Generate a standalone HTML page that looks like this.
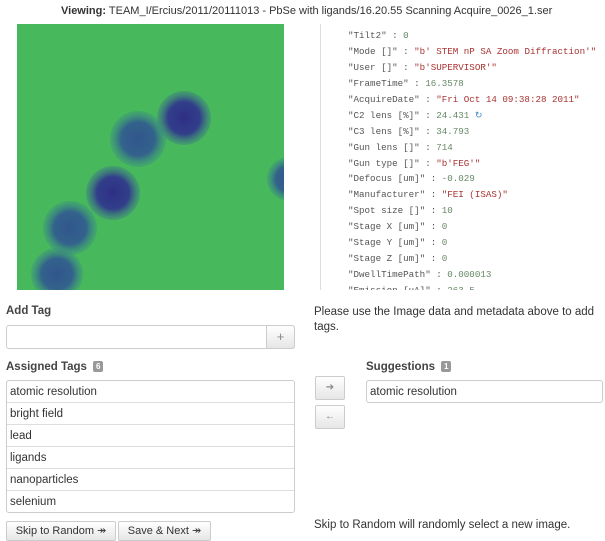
<!DOCTYPE html>
<html><head><meta charset="utf-8"><style>
*{box-sizing:border-box;margin:0;padding:0}
body{width:605px;height:530px;overflow:hidden;background:#fff;font-family:"Liberation Sans",sans-serif;color:#333;font-size:11px;position:relative}
.a{position:absolute}
.hd{left:61px;top:5px;font-size:11px;white-space:nowrap;color:#333}
.meta{left:348px;top:28px;font-family:"Liberation Mono",monospace;font-size:9.2px;line-height:15.93px;color:#555;white-space:nowrap;height:262px;overflow:hidden}
.s{color:#a33}.n{color:#686}
.lbl{font-weight:bold;font-size:11.5px;color:#444}
.badge{display:inline-block;background:#999;color:#fff;font-size:8px;padding:0 3px;border-radius:2px;margin-left:6px;vertical-align:1px;line-height:11px}
.box{border:1px solid #ccc;border-radius:3px}
.row{height:22px;line-height:22px;padding-left:3px;border-bottom:1px solid #ddd;font-size:11.5px;color:#333}
.btn{border:1px solid #ccc;background:linear-gradient(#fff,#e6e6e6);border-radius:2px;color:#888;text-align:center}
</style></head><body>
<div class="a hd"><b>Viewing:</b> TEAM_I/Ercius/2011/20111013 - PbSe with ligands/16.20.55 Scanning Acquire_0026_1.ser</div>
<svg class="a" style="left:17px;top:24px" width="267" height="266">
<defs>
<radialGradient id="d"><stop offset="0" stop-color="#2e2f86"/><stop offset=".6" stop-color="#323f8a"/><stop offset="1" stop-color="#3b6e8e" stop-opacity="0.3"/></radialGradient>
<radialGradient id="t"><stop offset="0" stop-color="#31568c"/><stop offset=".6" stop-color="#33628c"/><stop offset="1" stop-color="#3a8a88" stop-opacity="0.3"/></radialGradient>
</defs>
<rect width="267" height="266" fill="#47b85c"/>
<circle cx="167" cy="94" r="27" fill="url(#d)"/>
<circle cx="121" cy="115" r="28" fill="url(#t)"/>
<circle cx="96" cy="169" r="27" fill="url(#d)"/>
<circle cx="53" cy="204" r="27" fill="url(#t)"/>
<circle cx="40" cy="250" r="26" fill="url(#t)"/>
<circle cx="272" cy="155" r="22" fill="url(#t)"/>
</svg>
<div class="a" style="left:320px;top:24px;width:1px;height:266px;background:#ddd"></div>
<div class="a meta">"Tilt2" : <span class="n">0</span><br>"Mode []" : <span class="s">"b' STEM nP SA Zoom Diffraction'"</span><br>"User []" : <span class="s">"b'SUPERVISOR'"</span><br>"FrameTime" : <span class="n">16.3578</span><br>"AcquireDate" : <span class="s">"Fri Oct 14 09:38:28 2011"</span><br>"C2 lens [%]" : <span class="n">24.431</span> <span style="color:#48c">&#x21bb;</span><br>"C3 lens [%]" : <span class="n">34.793</span><br>"Gun lens []" : <span class="n">714</span><br>"Gun type []" : <span class="s">"b'FEG'"</span><br>"Defocus [um]" : <span class="n">-0.029</span><br>"Manufacturer" : <span class="s">"FEI (ISAS)"</span><br>"Spot size []" : <span class="n">10</span><br>"Stage X [um]" : <span class="n">0</span><br>"Stage Y [um]" : <span class="n">0</span><br>"Stage Z [um]" : <span class="n">0</span><br>"DwellTimePath" : <span class="n">0.000013</span><br>"Emission [uA]" : <span class="n">263.5</span></div>
<div class="a lbl" style="left:6px;top:305px">Add Tag</div>
<div class="a box" style="left:6px;top:325px;width:289px;height:24px"></div>
<div class="a btn" style="left:266px;top:325px;width:29px;height:24px;line-height:22px;font-size:13px;border-radius:0 3px 3px 0">+</div>
<div class="a" style="left:314px;top:305px;font-size:11.5px;line-height:15px;width:290px">Please use the Image data and metadata above to add tags.</div>
<div class="a lbl" style="left:6px;top:361px">Assigned Tags<span class="badge">6</span></div>
<div class="a box" style="left:6px;top:380px;width:289px;height:133px;overflow:hidden">
<div class="row">atomic resolution</div><div class="row">bright field</div><div class="row">lead</div><div class="row">ligands</div><div class="row">nanoparticles</div><div class="row" style="border:0">selenium</div></div>
<div class="a btn" style="left:315px;top:376px;width:30px;height:24px;line-height:22px;font-size:10px">&#x2794;</div>
<div class="a btn" style="left:315px;top:405px;width:30px;height:24px;line-height:22px;font-size:10px">&#x2190;</div>
<div class="a lbl" style="left:366px;top:361px">Suggestions<span class="badge">1</span></div>
<div class="a box" style="left:366px;top:380px;width:237px;height:23px;line-height:22px;padding-left:3px;font-size:11.5px">atomic resolution</div>
<div class="a btn" style="left:6px;top:521px;width:110px;height:20px;color:#333;font-size:11px;line-height:18px">Skip to Random &#x21a0;</div>
<div class="a btn" style="left:118px;top:521px;width:93px;height:20px;color:#333;font-size:11px;line-height:18px">Save &amp; Next &#x21a0;</div>
<div class="a" style="left:314px;top:519px;font-size:11.5px;white-space:nowrap">Skip to Random will randomly select a new image.</div>
</body></html>
